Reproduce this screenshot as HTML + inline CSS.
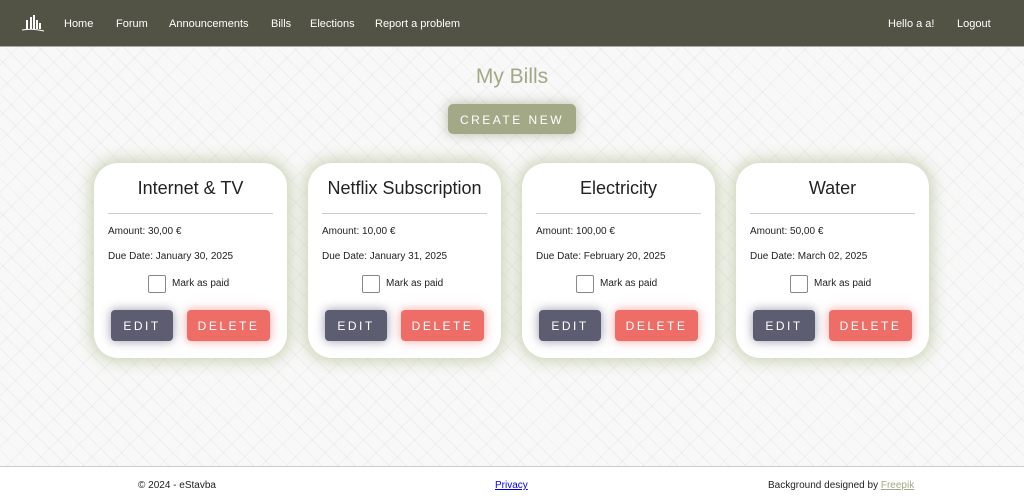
<!DOCTYPE html>
<html><head><style>
*{box-sizing:border-box;margin:0;padding:0}
body{width:1024px;height:502px;overflow:hidden;font-family:"Liberation Sans",sans-serif;background:#f6f6f6;position:relative;color:#222}
.bg{position:absolute;left:0;top:47px;width:1024px;height:419px;background:
repeating-linear-gradient(45deg,transparent 0 11px,rgba(0,0,0,.04) 11px 12px),
repeating-linear-gradient(-45deg,transparent 0 17px,rgba(0,0,0,.03) 17px 18px),#f8f8f8}
nav{position:absolute;left:0;top:0;width:1024px;height:47px;background:#525344;border-bottom:1px solid #aaa;color:#fff;font-size:11px}
nav span{position:absolute;top:18px}
h1{position:absolute;top:65px;left:0;width:1024px;text-align:center;font-weight:normal;font-size:21px;color:#a3a987}
.cn{position:absolute;left:448px;top:104px;width:128px;height:30px;background:#a3a987;color:#fff;font-size:12px;letter-spacing:2.5px;text-align:center;line-height:32px;border-radius:5px;box-shadow:0 0 12px rgba(140,150,110,.6)}
.card{position:absolute;top:163px;width:193px;height:195px;background:#fff;border-radius:24px;box-shadow:0 0 14px 4px rgba(190,200,160,.7)}
.card h2{font-weight:normal;font-size:18px;text-align:center;margin-top:15px;height:24px}
.card hr{border:0;border-top:1px solid #ccc;margin:11px 14px 0}
.card p{font-size:10px;margin-left:14px;position:absolute}
.cb{position:absolute;left:54px;top:112px;width:18px;height:18px;border:1px solid #888;border-radius:2px}
.mp{position:absolute;left:78px;top:115px;font-size:10px}
.b{position:absolute;top:147px;height:31px;border-radius:4px;color:#fff;font-size:12px;letter-spacing:2.5px;text-align:center;line-height:32px}
.e{left:17px;width:62px;background:#5d5d72;box-shadow:0 0 10px rgba(80,80,110,.6)}
.d{left:93px;width:83px;background:#ef6d67;box-shadow:0 0 10px rgba(240,100,100,.6)}
footer{position:absolute;left:0;top:466px;width:1024px;height:36px;background:#fff;border-top:1px solid #ccc;font-size:10px}
footer span{position:absolute;top:13px}
</style></head><body>
<div class="bg"></div>
<nav>
<svg style="position:absolute;left:21px;top:14px" width="24" height="18" viewBox="0 0 24 18"><g fill="#fff"><rect x="5" y="6" width="2" height="9"/><rect x="9" y="3" width="2" height="12"/><rect x="12" y="1" width="2" height="14"/><rect x="15" y="6" width="2" height="9"/><rect x="18" y="9" width="2" height="6"/></g><path d="M1 16Q12 14 23 17" stroke="#fff" fill="none"/></svg>
<span style="left:64px">Home</span><span style="left:116px">Forum</span><span style="left:169px">Announcements</span><span style="left:271px">Bills</span><span style="left:310px">Elections</span><span style="left:375px">Report a problem</span><span style="left:888px">Hello a a!</span><span style="left:957px">Logout</span>
</nav>
<h1>My Bills</h1>
<div class="cn">CREATE NEW</div>

<div class="card" style="left:94px"><h2>Internet &amp; TV</h2><hr><p style="top:63px">Amount: 30,00 €</p><p style="top:88px">Due Date: January 30, 2025</p><div class="cb"></div><div class="mp">Mark as paid</div><div class="b e">EDIT</div><div class="b d">DELETE</div></div>
<div class="card" style="left:308px"><h2>Netflix Subscription</h2><hr><p style="top:63px">Amount: 10,00 €</p><p style="top:88px">Due Date: January 31, 2025</p><div class="cb"></div><div class="mp">Mark as paid</div><div class="b e">EDIT</div><div class="b d">DELETE</div></div>
<div class="card" style="left:522px"><h2>Electricity</h2><hr><p style="top:63px">Amount: 100,00 €</p><p style="top:88px">Due Date: February 20, 2025</p><div class="cb"></div><div class="mp">Mark as paid</div><div class="b e">EDIT</div><div class="b d">DELETE</div></div>
<div class="card" style="left:736px"><h2>Water</h2><hr><p style="top:63px">Amount: 50,00 €</p><p style="top:88px">Due Date: March 02, 2025</p><div class="cb"></div><div class="mp">Mark as paid</div><div class="b e">EDIT</div><div class="b d">DELETE</div></div>

<footer><span style="left:138px">© 2024 - eStavba</span><span style="left:495px;color:#00e;text-decoration:underline">Privacy</span><span style="left:768px">Background designed by <u style="color:#a3a987">Freepik</u></span></footer>
</body></html>
